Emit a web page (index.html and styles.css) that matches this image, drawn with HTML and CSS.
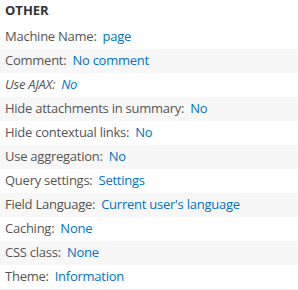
FILE: index.html
```html
<!DOCTYPE html>
<html lang="en">
<head>
  <meta charset="UTF-8">
  <title>Views - Other</title>
  <link rel="stylesheet" href="styles.css">
</head>
<body>
  <div class="views-display-column">
    <h3 class="section-title">OTHER</h3>
    <ul class="settings-list">
      <li class="setting"><span class="label">Machine Name:</span><a href="#">page</a></li>
      <li class="setting"><span class="label">Comment:</span><a href="#">No comment</a></li>
      <li class="setting defaulted"><span class="label">Use AJAX:</span><a href="#">No</a></li>
      <li class="setting"><span class="label">Hide attachments in summary:</span><a href="#">No</a></li>
      <li class="setting"><span class="label">Hide contextual links:</span><a href="#">No</a></li>
      <li class="setting"><span class="label">Use aggregation:</span><a href="#">No</a></li>
      <li class="setting"><span class="label">Query settings:</span><a href="#">Settings</a></li>
      <li class="setting"><span class="label">Field Language:</span><a href="#">Current user's language</a></li>
      <li class="setting"><span class="label">Caching:</span><a href="#">None</a></li>
      <li class="setting"><span class="label">CSS class:</span><a href="#">None</a></li>
      <li class="setting"><span class="label">Theme:</span><a href="#">Information</a></li>
    </ul>
  </div>
</body>
</html>
```

FILE: styles.css
```css
/* Basic styling */
body {
  font-family: "Open Sans", "DejaVu Sans", sans-serif;
  margin: 0;
  padding: 0;
  background-color: #fff;
  color: #555;
}

.views-display-column {
  width: 298px;
}

.section-title {
  margin: 0;
  padding: 1px 5px 0;
  height: 24px;
  font-size: 13px;
  font-weight: bold;
  color: #333;
  line-height: 18px;
}

.settings-list {
  list-style-type: none;
  margin: 0;
  padding: 0;
  border-bottom: 1px solid #eee;
}

.setting {
  height: 22px;
  line-height: 22px;
  padding: 0 5px 2px;
  font-size: 13px;
  letter-spacing: -0.25px;
  white-space: nowrap;
}

.setting:nth-child(even) {
  background-color: #f7f7f7;
}

.setting .label {
  margin-right: 6px;
}

.setting a {
  text-decoration: none;
  color: #0074bd;
}

.defaulted {
  font-style: italic;
}
```
